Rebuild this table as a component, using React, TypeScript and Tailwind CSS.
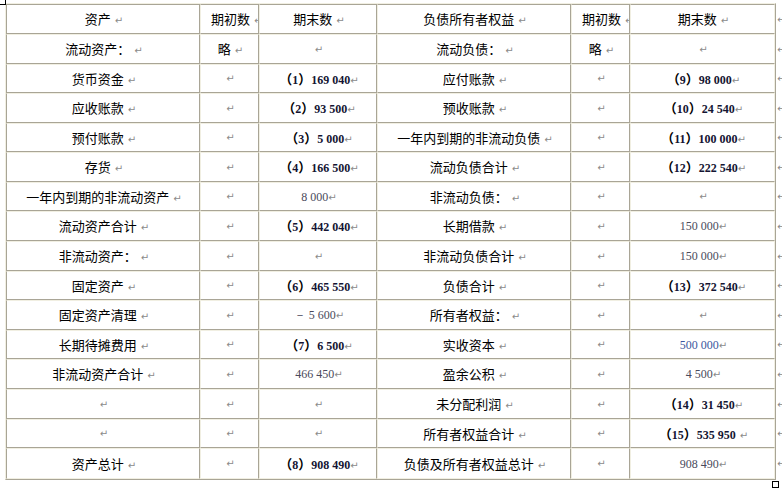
import React from 'react';

type Cell = string | { no: number; value: string; gap?: boolean };

const ROWS: Cell[][] = [
  ['资产', '期初数', '期末数', '负债所有者权益', '期初数', '期末数'],
  ['流动资产：', '略', '', '流动负债：', '略', ''],
  ['货币资金', '', { no: 1, value: '169 040' }, '应付账款', '', { no: 9, value: '98 000' }],
  ['应收账款', '', { no: 2, value: '93 500' }, '预收账款', '', { no: 10, value: '24 540' }],
  ['预付账款', '', { no: 3, value: '5 000' }, '一年内到期的非流动负债', '', { no: 11, value: '100 000' }],
  ['存货', '', { no: 4, value: '166 500' }, '流动负债合计', '', { no: 12, value: '222 540' }],
  ['一年内到期的非流动资产', '', '8 000', '非流动负债：', '', ''],
  ['流动资产合计', '', { no: 5, value: '442 040' }, '长期借款', '', '150 000'],
  ['非流动资产：', '', '', '非流动负债合计', '', '150 000'],
  ['固定资产', '', { no: 6, value: '465 550' }, '负债合计', '', { no: 13, value: '372 540' }],
  ['固定资产清理', '', '－ 5 600', '所有者权益：', '', ''],
  ['长期待摊费用', '', { no: 7, value: '6 500' }, '实收资本', '', '500 000'],
  ['非流动资产合计', '', '466 450', '盈余公积', '', '4 500'],
  ['', '', '', '未分配利润', '', { no: 14, value: '31 450' }],
  ['', '', '', '所有者权益合计', '', { no: 15, value: '535 950', gap: true }],
  ['资产总计', '', { no: 8, value: '908 490' }, '负债及所有者权益总计', '', '908 490'],
];

const ROW_GRID =
  'grid-rows-[30px_30px_29px_30px_29px_30px_29px_30px_30px_29px_30px_29px_30px_30px_29px_31px]';

const Mark = ({ gap = true }: { gap?: boolean }) => (
  <span
    className={`${gap ? 'ml-[4px]' : ''} text-[10px] font-normal text-[#8a8a8a] font-['DejaVu_Sans',sans-serif]`}
  >
    ↵
  </span>
);

const isNumber = (s: string) => /^[－\d]/.test(s);

const CellContent = ({ cell }: { cell: Cell }) => {
  if (typeof cell !== 'string') {
    return (
      <span className="font-['Liberation_Serif',serif] text-[12px] font-bold text-[#141432]">
        <span className="font-['Noto_Sans_CJK_SC',sans-serif] text-[13px] text-black">（</span>
        {cell.no}
        <span className="font-['Noto_Sans_CJK_SC',sans-serif] text-[13px] text-black">）</span>
        {cell.value}
        <Mark gap={!!cell.gap} />
      </span>
    );
  }
  if (cell === '') return <Mark gap={false} />;
  if (isNumber(cell)) {
    return (
      <span
        className={`font-['Liberation_Serif',serif] text-[12px] ${
          cell === '500 000' ? 'text-[#3c55a0]' : 'text-[#4a4a5c]'
        }`}
      >
        {cell}
        <Mark gap={false} />
      </span>
    );
  }
  return (
    <span className="text-[13px] text-black">
      {cell}
      <Mark />
    </span>
  );
};

export default function App() {
  return (
    <div className="relative w-[782px] h-[490px] overflow-hidden bg-white font-['Noto_Sans_CJK_SC','Liberation_Sans',sans-serif]">
      {/* table move handle */}
      <div className="absolute left-0 top-0 w-[6px] h-[5px] border-r border-b border-black" />

      <div className="flex pt-[3px] pl-[5px]">
        <div className="border border-t-[#f1efe2] border-l-[#f1efe2] border-b-[#a9a596] border-r-[#a9a596]">
          <div className={`grid grid-cols-[194px_59px_118px_194px_59px_145px] ${ROW_GRID}`}>
            {ROWS.map((row, r) =>
              row.map((cell, c) => (
                <div
                  key={`${r}-${c}`}
                  className={`flex items-center [justify-content:safe_center] overflow-hidden whitespace-nowrap pl-[10px] pr-[8px] border
                    ${r === 0 ? 'border-t-[#a9a596]' : 'border-t-[#f1efe2]'}
                    ${r === ROWS.length - 1 ? 'border-b-[#f1efe2]' : 'border-b-[#a9a596]'}
                    ${c === 0 ? 'border-l-[#a9a596]' : 'border-l-[#f1efe2]'}
                    ${c === row.length - 1 ? 'border-r-[#f1efe2]' : 'border-r-[#a9a596]'}`}
                >
                  <CellContent cell={cell} />
                </div>
              ))
            )}
          </div>
        </div>

        {/* row end marks */}
        <div className={`grid ${ROW_GRID} mt-[1px] w-[10px] pl-[1px]`}>
          {ROWS.map((_, r) => (
            <div key={r} className="flex items-center">
              <Mark gap={false} />
            </div>
          ))}
        </div>
      </div>

      {/* table resize handle */}
      <div className="absolute left-[772px] top-[481px] w-[7px] h-[7px] border border-black bg-white" />
    </div>
  );
}
